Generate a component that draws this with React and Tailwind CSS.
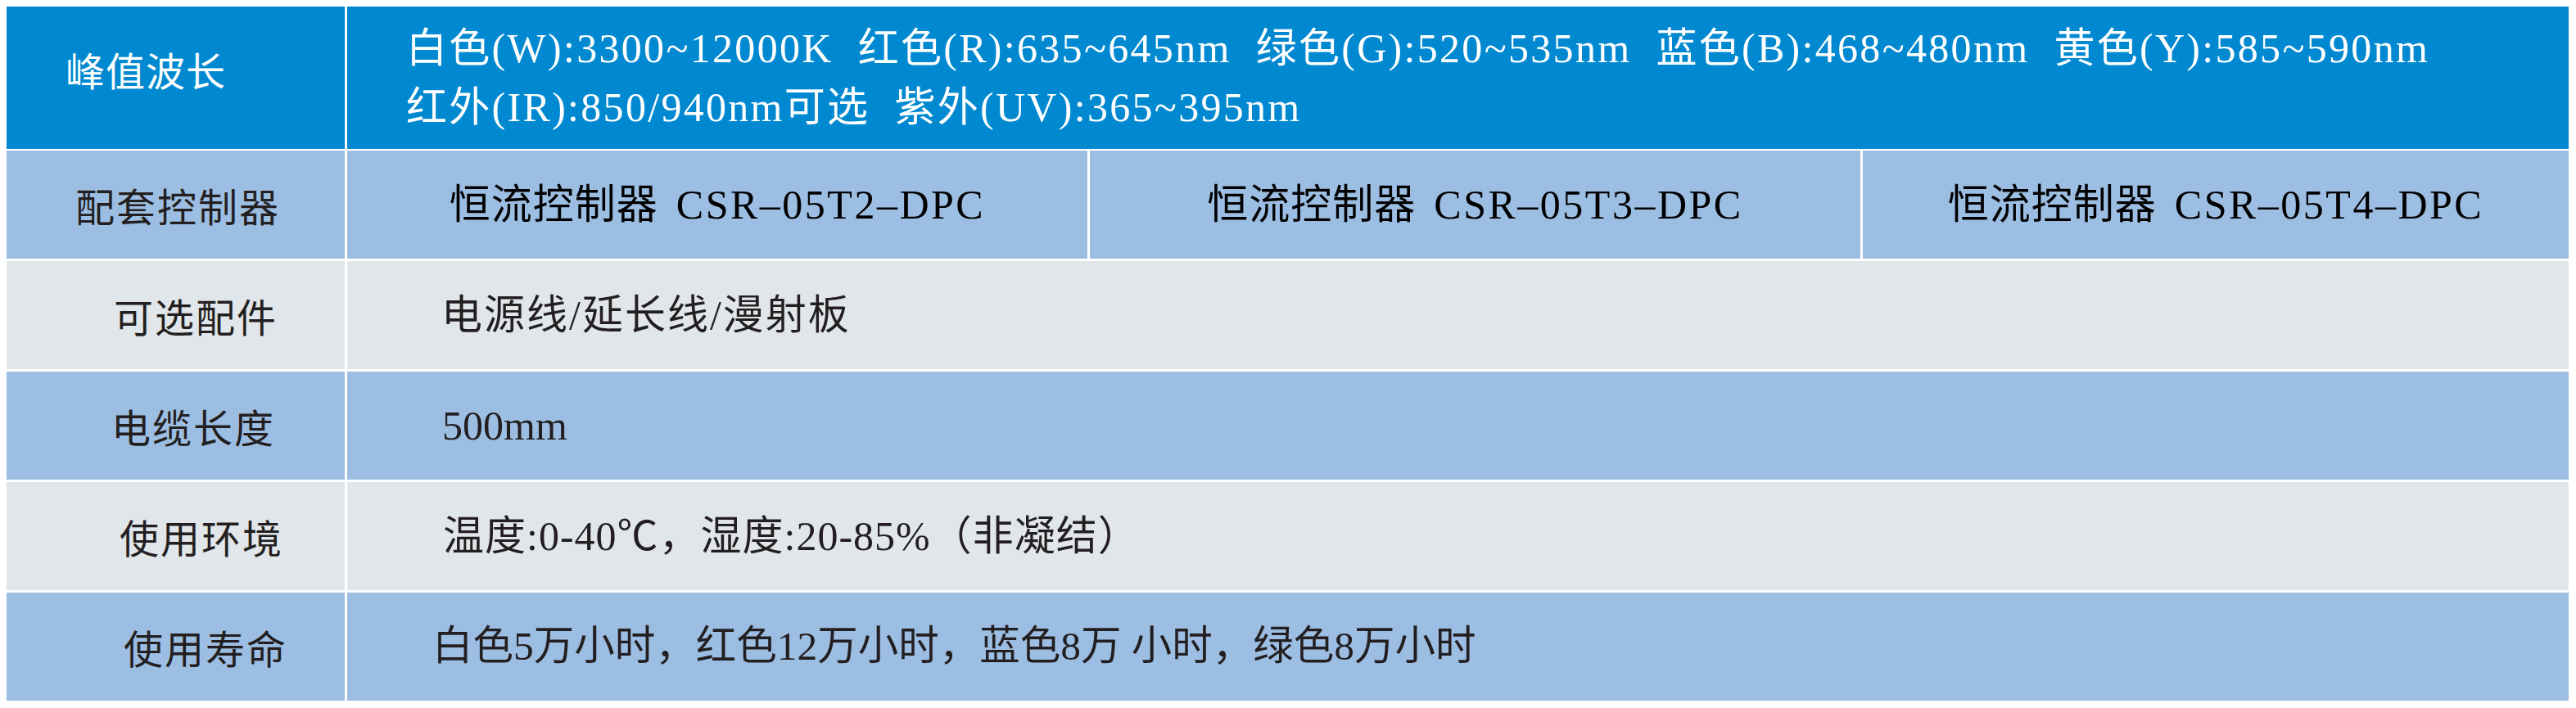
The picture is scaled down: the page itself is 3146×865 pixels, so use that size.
import React from 'react';

const FONT = 'font-["Liberation_Serif","Noto_Sans_CJK_SC",serif]';
const CJK = 'font-["Noto_Sans_CJK_SC","Noto_Sans_CJK_JP",sans-serif]';

const waveLine1 = [
  '白色(W):3300~12000K',
  '红色(R):635~645nm',
  '绿色(G):520~535nm',
  '蓝色(B):468~480nm',
  '黄色(Y):585~590nm',
];

const waveLine2 = ['红外(IR):850/940nm可选', '紫外(UV):365~395nm'];

const controllers = [
  { name: 'CSR–05T2–DPC', width: 'w-[904px]' },
  { name: 'CSR–05T3–DPC', width: 'w-[941px]' },
  { name: 'CSR–05T4–DPC', width: 'w-[862px]' },
];

const rows = [
  {
    label: '可选配件',
    pad: 'pl-[131px]',
    value: '电源线/延长线/漫射板',
    vpad: 'pl-[115px]',
    text: 'text-[50px] tracking-[2px]',
    bg: 'bg-[#e1e6ea]',
  },
  {
    label: '电缆长度',
    pad: 'pl-[128px]',
    value: '500mm',
    vpad: 'pl-[116px]',
    text: 'text-[50px]',
    bg: 'bg-[#9dbee3]',
  },
  {
    label: '使用环境',
    pad: 'pl-[138px]',
    value: '温度:0-40℃，湿度:20-85%（非凝结）',
    vpad: 'pl-[117px]',
    text: 'text-[50px] tracking-[1px]',
    bg: 'bg-[#e1e6ea]',
  },
  {
    label: '使用寿命',
    pad: 'pl-[143px]',
    value: '白色5万小时，红色12万小时，蓝色8万 小时，绿色8万小时',
    vpad: 'pl-[104px]',
    text: 'text-[49.5px]',
    bg: 'bg-[#9dbee3]',
  },
];

function Label({ children, pad, bg }) {
  return (
    <div className={`w-[413px] shrink-0 flex items-center ${pad} ${bg}`}>
      <span className={`${CJK} text-[48px] leading-none tracking-[2px] text-[#231f20]`}>{children}</span>
    </div>
  );
}

export default function App() {
  return (
    <div className="w-[3146px] h-[865px] bg-white p-2">
      <div className="w-[3129px] flex flex-col gap-[3px]">
        {/* header row: peak wavelength */}
        <div className="h-[174px] flex gap-[3px] mb-[-1px]">
          <div className="w-[413px] shrink-0 flex items-center pl-[72px] pb-[22px] bg-[#0089d0]">
            <span className={`${CJK} text-[48px] leading-none tracking-[1px] text-white`}>峰值波长</span>
          </div>
          <div
            className={`flex-1 flex flex-col justify-center pl-[72px] bg-[#0089d0] text-white ${FONT} text-[50px] tracking-[2.3px] leading-[72px]`}
          >
            <div className="flex gap-[30px] whitespace-nowrap">
              {waveLine1.map((t) => (
                <span key={t}>{t}</span>
              ))}
            </div>
            <div className="flex gap-[30px] whitespace-nowrap">
              {waveLine2.map((t) => (
                <span key={t}>{t}</span>
              ))}
            </div>
          </div>
        </div>

        {/* controllers */}
        <div className="h-[132px] flex gap-[3px]">
          <Label pad="pl-[84px]" bg="bg-[#9dbee3]">配套控制器</Label>
          <div className="flex-1 flex gap-[3px]">
            {controllers.map((c) => (
              <div key={c.name} className={`${c.width} shrink-0 flex items-center justify-center bg-[#9dbee3]`}>
                <span className={`${FONT} text-[50px] leading-none text-black whitespace-nowrap flex gap-[22px]`}>
                  <span className="tracking-[1px]">恒流控制器</span>
                  <span className="tracking-[2.5px]">{c.name}</span>
                </span>
              </div>
            ))}
          </div>
        </div>

        {rows.map((r) => (
          <div key={r.label} className="h-[132px] flex gap-[3px]">
            <Label pad={r.pad} bg={r.bg}>{r.label}</Label>
            <div className={`flex-1 flex items-center ${r.vpad} ${r.bg}`}>
              <span className={`${FONT} ${r.text} leading-none text-[#231f20] whitespace-nowrap`}>{r.value}</span>
            </div>
          </div>
        ))}
      </div>
    </div>
  );
}
